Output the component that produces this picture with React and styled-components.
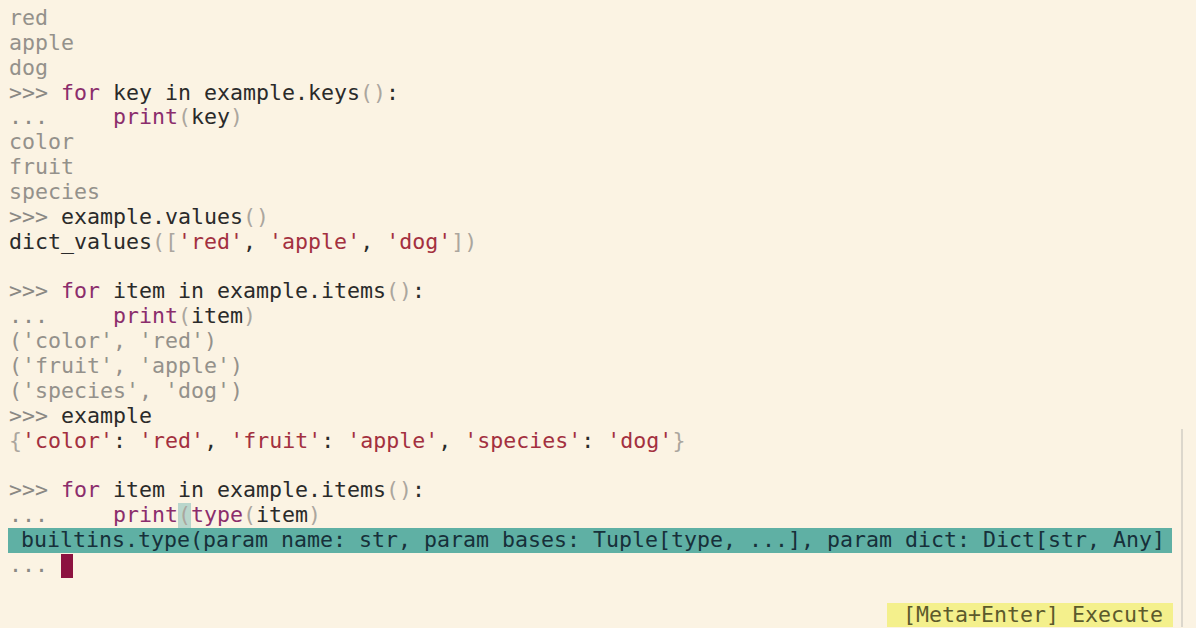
import React from "react";
import styled, { createGlobalStyle } from "styled-components";

// ─── palette ───
const C = {
  bg: "#fbf3e3",
  out: "#94918b",
  prompt: "#8a8884",
  code: "#2a2a2a",
  kw: "#8b2d6c",
  str: "#a3303f",
  punct: "#aba69e",
  bar: "#5fb0a4",
  barText: "#17303a",
  cursor: "#8c1240",
  hint: "#f4f08c",
  hintText: "#5c5a2c",
  rule: "#dcd7cc",
};

const GlobalStyle = createGlobalStyle`
  html, body { margin: 0; padding: 0; background: ${C.bg}; }
  body { width: 1196px; height: 628px; overflow: hidden; }
`;

// ─── styled ───

const Screen = styled.div`
  width: 1196px;
  height: 628px;
  background: ${C.bg};
  font-family: "DejaVu Sans Mono", "Liberation Mono", monospace;
  font-size: 21.6px;
  line-height: 24.86px;
  color: ${C.code};
  padding: 6px 0 0 9px;
  box-sizing: border-box;
  overflow: hidden;
`;

const Lower = styled.div`
  width: 1172px;
  border-right: 2px solid ${C.rule};
`;

const Line = styled.div`
  height: 24.86px;
  white-space: pre;
  display: flex;
  align-items: center;
  justify-content: ${({ right }) => (right ? "flex-end" : "flex-start")};
`;

const Out = styled.span` color: ${C.out}; `;
const Prompt = styled.span` color: ${C.prompt}; `;
const Kw = styled.span` color: ${C.kw}; `;
const Str = styled.span` color: ${C.str}; `;
const P = styled.span`
  color: ${C.punct};
  background: ${({ match }) => (match ? "#b9d6cc" : "transparent")};
`;

const Signature = styled.div`
  height: 24.86px;
  width: 1164px;
  margin-left: -1px;
  white-space: pre;
  background: ${C.bar};
  color: ${C.barText};
  display: flex;
  align-items: center;
`;

const Cursor = styled.span`
  display: inline-block;
  width: 12px;
  height: 22px;
  background: ${C.cursor};
  box-shadow: 0 2px 0 ${C.cursor};
`;

const Hint = styled.span`
  background: ${C.hint};
  color: ${C.hintText};
  padding: 0 10px 0 16px;
  margin-right: 8px;
`;

// ─── component ───

const S = ({ children }) => <Str>'{children}'</Str>;

export default function App() {
  return (
    <>
      <GlobalStyle />
      <Screen>
        <Line><Out>red</Out></Line>
        <Line><Out>apple</Out></Line>
        <Line><Out>dog</Out></Line>
        <Line>
          <Prompt>{">>> "}</Prompt><Kw>for</Kw> key in example.keys<P>()</P>:
        </Line>
        <Line>
          <Prompt>{"...     "}</Prompt><Kw>print</Kw><P>(</P>key<P>)</P>
        </Line>
        <Line><Out>color</Out></Line>
        <Line><Out>fruit</Out></Line>
        <Line><Out>species</Out></Line>
        <Line>
          <Prompt>{">>> "}</Prompt>example.values<P>()</P>
        </Line>
        <Line>
          dict_values<P>([</P><S>red</S>, <S>apple</S>, <S>dog</S><P>])</P>
        </Line>
        <Line />
        <Line>
          <Prompt>{">>> "}</Prompt><Kw>for</Kw> item in example.items<P>()</P>:
        </Line>
        <Line>
          <Prompt>{"...     "}</Prompt><Kw>print</Kw><P>(</P>item<P>)</P>
        </Line>
        <Line><Out>('color', 'red')</Out></Line>
        <Line><Out>('fruit', 'apple')</Out></Line>
        <Line><Out>('species', 'dog')</Out></Line>
        <Line>
          <Prompt>{">>> "}</Prompt>example
        </Line>
        <Lower>
          <Line>
            <P>{"{"}</P><S>color</S>: <S>red</S>, <S>fruit</S>: <S>apple</S>, <S>species</S>: <S>dog</S><P>{"}"}</P>
          </Line>
          <Line />
          <Line>
            <Prompt>{">>> "}</Prompt><Kw>for</Kw> item in example.items<P>()</P>:
          </Line>
          <Line>
            <Prompt>{"...     "}</Prompt><Kw>print</Kw><P match>(</P><Kw>type</Kw><P>(</P>item<P>)</P>
          </Line>
          <Signature>
            {" builtins.type(param name: str, param bases: Tuple[type, ...], param dict: Dict[str, Any]"}
          </Signature>
          <Line>
            <Prompt>{"... "}</Prompt><Cursor />
          </Line>
          <Line />
          <Line right>
            <Hint>[Meta+Enter] Execute</Hint>
          </Line>
        </Lower>
      </Screen>
    </>
  );
}
